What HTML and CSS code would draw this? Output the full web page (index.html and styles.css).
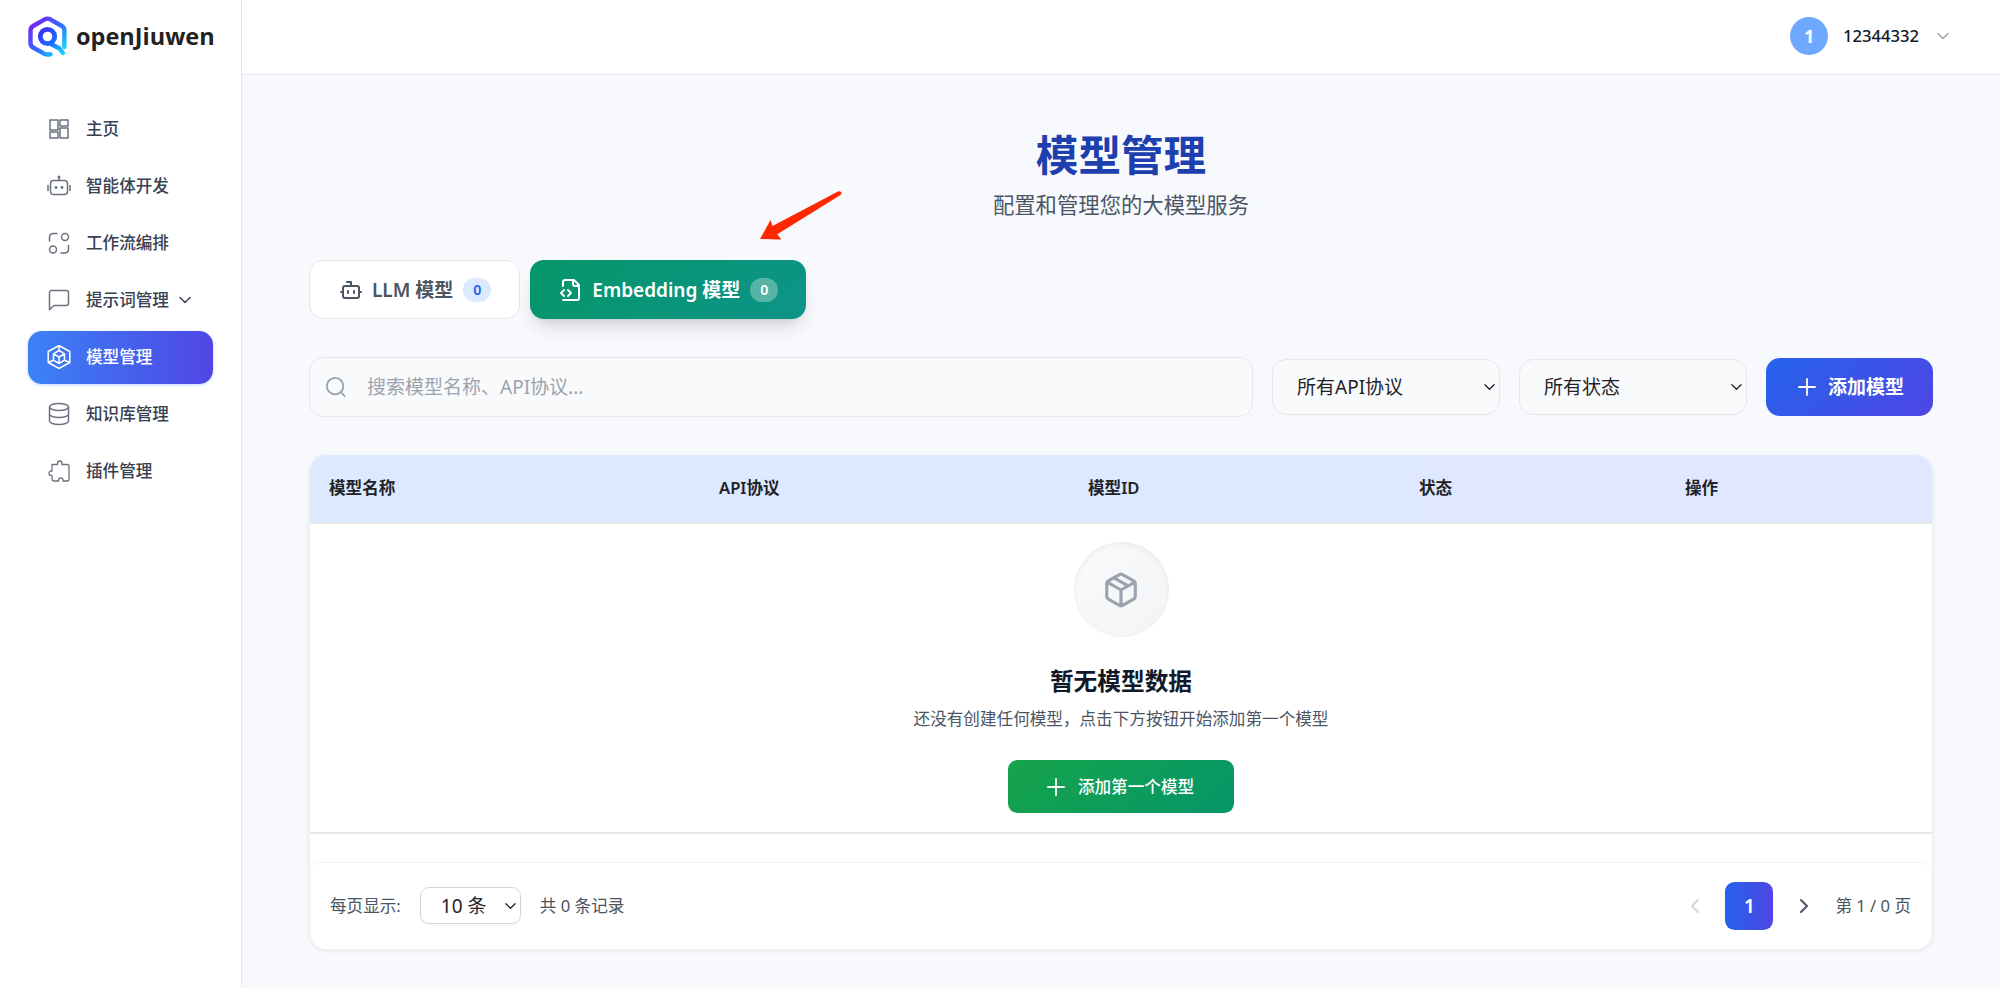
FILE: index.html
```html
<!DOCTYPE html>
<html lang="zh-CN">
<head>
    <meta charset="UTF-8">
    <meta name="viewport" content="width=device-width, initial-scale=1.0">
    <title>openJiuwen</title>
    <link rel="stylesheet" href="styles.css">
</head>
<body>
    <aside class="sidebar">
        <div class="logo">
            <svg class="logo-mark" viewBox="0 0 40 42" fill="none">
                <defs>
                    <linearGradient id="logo-outer" x1="4" y1="6" x2="38" y2="38" gradientUnits="userSpaceOnUse">
                        <stop offset="0" stop-color="#7a22f5"/>
                        <stop offset="0.5" stop-color="#2f6bff"/>
                        <stop offset="1" stop-color="#0ff0ff"/>
                    </linearGradient>
                    <linearGradient id="logo-inner" x1="12" y1="12" x2="38" y2="40" gradientUnits="userSpaceOnUse">
                        <stop offset="0" stop-color="#3a2bf5"/>
                        <stop offset="0.5" stop-color="#1d6dff"/>
                        <stop offset="1" stop-color="#0ff0ff"/>
                    </linearGradient>
                </defs>
                <path d="M36.4 31V14.500Q36.400 11.500 33.800 10L22.200 3.300Q19.500 1.900 16.800 3.300L5.100 10Q2.500 11.500 2.500 14.500V27Q2.500 30 5.100 31.500L16 37.700Q18.500 39 22.500 38.300" stroke="url(#logo-outer)" stroke-width="4.400" stroke-linecap="round"/>
                <circle cx="19.500" cy="20.500" r="7.200" stroke="url(#logo-inner)" stroke-width="4.800"/>
                <path d="M22 27.500L31.500 32.500L35 37" stroke="url(#logo-inner)" stroke-width="4.400" stroke-linecap="round" stroke-linejoin="round"/>
            </svg>
            <span class="logo-text">openJiuwen</span>
        </div>
        <nav class="nav">
            <a class="nav-item">
                <svg class="nav-icon" viewBox="0 0 24 24"><path d="M3 3h8v10H3zM13 3h8v6h-8zM13 11h8v10h-8zM3 15h8v6H3z"/></svg>
                <span>主页</span>
            </a>
            <a class="nav-item">
                <svg class="nav-icon" viewBox="0 0 24 24"><rect x="3.500" y="6.500" width="17" height="14" rx="3"/><path d="M12 6.500V3M1 11.500v5M23 11.500v5"/><circle cx="12" cy="3" r=".8"/><circle cx="9" cy="13.500" r=".7"/><circle cx="15" cy="13.500" r=".7"/></svg>
                <span>智能体开发</span>
            </a>
            <a class="nav-item">
                <svg class="nav-icon" viewBox="0 0 24 24"><circle cx="18" cy="6" r="3.500"/><circle cx="6" cy="18.500" r="3.500"/><path d="M2.500 10V6.500q0-4 4-4H10M21.500 14.500V18q0 4-4 4H14"/></svg>
                <span>工作流编排</span>
            </a>
            <a class="nav-item">
                <svg class="nav-icon" viewBox="0 0 24 24"><path d="M21.500 15.500a2 2 0 0 1-2 2H7l-4.500 4.300V4.500a2 2 0 0 1 2-2h15a2 2 0 0 1 2 2z"/></svg>
                <span>提示词管理</span>
                <svg class="nav-arrow" viewBox="0 0 12 8"><path d="M1 1.500l5 5 5-5"/></svg>
            </a>
            <a class="nav-item active">
                <svg class="nav-icon" viewBox="0 0 24 24"><path d="M12 .5l10.800 6v11L12 23.500 1.200 17.500v-11zM12 5.500l5.500 3.300v6.400L12 18.500l-5.500-3.300V8.800zM6.500 8.800L12 12l5.500-3.200M12 12v6.500M12 .5v5M1.200 17.500l5.300-2.300M22.800 17.500l-5.300-2.300"/></svg>
                <span>模型管理</span>
            </a>
            <a class="nav-item">
                <svg class="nav-icon" viewBox="0 0 24 24"><ellipse cx="12" cy="5" rx="9.500" ry="3.500"/><path d="M2.500 5v14c0 1.900 4.200 3.500 9.500 3.500s9.500-1.600 9.500-3.500V5M2.500 12c0 1.900 4.200 3.500 9.500 3.500s9.500-1.600 9.500-3.500"/></svg>
                <span>知识库管理</span>
            </a>
            <a class="nav-item">
                <svg class="nav-icon thin" viewBox="0 0 24 24"><path d="M5 5.500h5.500V4.200a2.200 2.200 0 0 1 4.400 0v1.300H20q2 0 2 2V20q0 2-2 2h-4v-1a2.200 2.200 0 0 0-4.400 0v1H7q-2 0-2-2v-3.600H4.200a2.200 2.200 0 0 1 0-4.400H5z"/></svg>
                <span>插件管理</span>
            </a>
        </nav>
    </aside>

    <div class="page">
        <header class="topbar">
            <span class="avatar">1</span>
            <span class="username">12344332</span>
            <svg class="user-arrow" viewBox="0 0 12 8"><path d="M1 1.500l5 5 5-5"/></svg>
        </header>

        <main class="content">
            <h1 class="title">模型管理</h1>
            <p class="subtitle">配置和管理您的大模型服务</p>

            <svg class="pointer" viewBox="0 0 82 49"><path d="M0 48L10.500 29 12.500 35 77.500 .8Q80 -.3 81.300 1.300 82 2.800 80.500 4L17.300 43.300 21.300 48.600z"/></svg>

            <div class="tabs">
                <button class="tab">
                    <svg class="tab-icon" viewBox="0 0 24 24"><path d="M12 8V4H8"/><rect width="16" height="12" x="4" y="8" rx="2"/><path d="M2 14h2M20 14h2M15 13v2M9 13v2"/></svg>
                    <span>LLM 模型</span>
                    <span class="count">0</span>
                </button>
                <button class="tab tab-active">
                    <svg class="tab-icon" viewBox="0 0 24 24"><path d="M4 22h14a2 2 0 0 0 2-2V7l-5-5H6a2 2 0 0 0-2 2v4"/><path d="M14 2v4a2 2 0 0 0 2 2h4M5 12l-3 3 3 3M9 18l3-3-3-3"/></svg>
                    <span>Embedding 模型</span>
                    <span class="count">0</span>
                </button>
            </div>

            <div class="filters">
                <div class="search">
                    <svg viewBox="0 0 24 24"><circle cx="11" cy="11" r="9"/><path d="M21.500 22l-4.300-4.500"/></svg>
                    <input type="text" placeholder="搜索模型名称、API协议...">
                </div>
                <div class="select">
                    <span>所有API协议</span>
                    <svg viewBox="0 0 12 8"><path d="M1 1.500l5 5 5-5"/></svg>
                </div>
                <div class="select">
                    <span>所有状态</span>
                    <svg viewBox="0 0 12 8"><path d="M1 1.500l5 5 5-5"/></svg>
                </div>
                <button class="add-btn">
                    <svg viewBox="0 0 16 16"><path d="M8 0v16M0 8h16"/></svg>
                    <span>添加模型</span>
                </button>
            </div>

            <section class="table-card">
                <div class="table-head">
                    <span>模型名称</span>
                    <span>API协议</span>
                    <span>模型ID</span>
                    <span>状态</span>
                    <span>操作</span>
                </div>
                <div class="empty">
                    <div class="empty-icon">
                        <svg viewBox="0 0 24 24"><path d="M11 21.730a2 2 0 0 0 2 0l7-4A2 2 0 0 0 21 16V8a2 2 0 0 0-1-1.730l-7-4a2 2 0 0 0-2 0l-7 4A2 2 0 0 0 3 8v8a2 2 0 0 0 1 1.730zM12 22V12M3.300 7L12 12l8.700-5M7.500 4.270l9 5.150"/></svg>
                    </div>
                    <h3>暂无模型数据</h3>
                    <p>还没有创建任何模型，点击下方按钮开始添加第一个模型</p>
                    <button class="first-btn">
                        <svg viewBox="0 0 16 16"><path d="M8 0v16M0 8h16"/></svg>
                        <span>添加第一个模型</span>
                    </button>
                </div>
                <div class="pagination">
                    <span>每页显示:</span>
                    <div class="page-size">
                        <span>10 条</span>
                        <svg viewBox="0 0 12 8"><path d="M1 1.500l5 5 5-5"/></svg>
                    </div>
                    <span>共 0 条记录</span>
                    <div class="pager">
                        <svg class="prev" viewBox="0 0 8 14"><path d="M7 1L1 7l6 6"/></svg>
                        <span class="page-no">1</span>
                        <svg class="next" viewBox="0 0 8 14"><path d="M1 1l6 6-6 6"/></svg>
                        <span class="page-info">第 1 / 0 页</span>
                    </div>
                </div>
            </section>
        </main>
    </div>
</body>
</html>
```
FILE: styles.css
```css
* {
    box-sizing: border-box;
}

body {
    margin: 0;
    display: flex;
    height: 988px;
    overflow: hidden;
    background: #f8f9fd;
    color: #1f2328;
    font-family: "Noto Sans", "Noto Sans CJK SC", sans-serif;
    font-size: 16.6px;
    line-height: 24px;
}

h1, h3, p {
    margin: 0;
}

button {
    font-family: inherit;
    line-height: inherit;
    border: none;
    padding: 0;
    cursor: pointer;
}

svg {
    display: block;
    flex: none;
    fill: none;
    stroke: currentColor;
    stroke-linecap: round;
    stroke-linejoin: round;
}

span {
    white-space: nowrap;
}

/* sidebar */
.sidebar {
    flex: none;
    width: 242px;
    padding: 16px 28px 0;
    background: #fff;
    border-right: 1px solid #e5e7eb;
}

.logo {
    display: flex;
    align-items: center;
    height: 42px;
    gap: 8px;
}

.logo-mark {
    width: 40px;
    height: 42px;
    stroke: none;
}

.logo-text {
    font-family: "Open Sans", "Noto Sans", sans-serif;
    font-size: 23.5px;
    font-weight: 700;
    color: #222;
    position: relative;
    top: -1px;
}

.nav {
    display: flex;
    flex-direction: column;
    gap: 4.4px;
    margin-top: 44.500px;
}

.nav-item {
    display: flex;
    align-items: center;
    height: 52.7px;
    padding-left: 19px;
    border-radius: 14px;
    color: #374151;
    font-weight: 500;
}

.nav-icon {
    width: 24px;
    height: 24px;
    margin-right: 15px;
    color: #6b7280;
    stroke-width: 1.5;
}

.nav-icon.thin {
    stroke-width: 1.3;
}

.nav-arrow {
    width: 12px;
    height: 8px;
    margin-left: 10px;
    stroke-width: 1.5;
}

.nav-item.active {
    background: linear-gradient(90deg, #3b82f6, #4f46e5);
    box-shadow: 0 1px 3px rgba(59, 130, 246, 0.35);
    color: #fff;
}

.nav-item.active .nav-icon {
    color: #fff;
}

/* top bar */
.page {
    flex: 1;
    display: flex;
    flex-direction: column;
}

.topbar {
    display: flex;
    align-items: center;
    justify-content: flex-end;
    height: 75px;
    padding: 0 51px 2px 0;
    background: #fff;
    border-bottom: 1px solid #e5e7eb;
}

.avatar {
    display: flex;
    align-items: center;
    justify-content: center;
    width: 38px;
    height: 38px;
    margin-right: 15px;
    border-radius: 50%;
    background: #6ea8ff;
    color: #fff;
    font-size: 18px;
    font-weight: 700;
}

.username {
    color: #111827;
    font-weight: 500;
}

.user-arrow {
    width: 12px;
    height: 8px;
    margin-left: 18px;
    color: #9ca3af;
    stroke-width: 1.4;
}

/* content */
.content {
    position: relative;
    padding: 52px 67px 0;
}

.title {
    height: 54px;
    color: #1e40af;
    font-size: 42.6px;
    font-weight: 700;
    line-height: 54px;
    text-align: center;
}

.subtitle {
    margin-top: 8px;
    color: #4b5563;
    font-size: 21.35px;
    line-height: 32px;
    text-align: center;
}

.pointer {
    position: absolute;
    left: 518px;
    top: 116px;
    width: 82px;
    height: 49px;
    fill: #ff2600;
    stroke: none;
}

.tabs {
    display: flex;
    gap: 10px;
    margin-top: 39px;
}

.tab {
    display: flex;
    align-items: center;
    height: 59px;
    padding: 0 28px 0 29px;
    border: 1px solid #e5e7eb;
    border-radius: 14px;
    background: #fff;
    color: #4b5563;
    font-size: 19px;
    font-weight: 600;
}

.tab-icon {
    width: 24px;
    height: 24px;
    margin-right: 9px;
    stroke-width: 2;
}

.count {
    width: 28px;
    height: 24px;
    margin-left: 10px;
    border-radius: 12px;
    background: #dbeafe;
    color: #2563eb;
    font-size: 14.2px;
    text-align: center;
}

.tab-active {
    border: none;
    background: linear-gradient(135deg, #059669, #0d9488);
    box-shadow: 0 12px 18px -4px rgba(0, 0, 0, 0.13), 0 4px 7px -4px rgba(0, 0, 0, 0.12);
    color: #fff;
}

.tab-active .count {
    background: rgba(255, 255, 255, 0.3);
    color: #fff;
}

.filters {
    display: flex;
    align-items: center;
    gap: 19px;
    margin-top: 38px;
}

.search {
    flex: 1;
    display: flex;
    align-items: center;
    height: 60px;
    padding-left: 15px;
    border: 1px solid #e5e7eb;
    border-radius: 14px;
    background: #f9fafb;
}

.search svg {
    width: 22px;
    height: 22px;
    margin-right: 20px;
    color: #9ca3af;
    stroke-width: 2;
}

.search input {
    flex: 1;
    border: none;
    outline: none;
    padding: 0;
    background: none;
    font-family: inherit;
    font-size: 19px;
}

.search input::placeholder {
    color: #9ca3af;
}

.select {
    display: flex;
    align-items: center;
    justify-content: space-between;
    width: 228px;
    height: 56px;
    padding: 0 4px 0 24px;
    border: 1px solid #e5e7eb;
    border-radius: 14px;
    background: #f9fafb;
    font-size: 19px;
}

.select svg {
    width: 11px;
    height: 8px;
    stroke-width: 1.4;
}

.add-btn {
    display: flex;
    align-items: center;
    justify-content: center;
    gap: 13px;
    width: 167px;
    height: 58px;
    padding-left: 4px;
    border-radius: 14px;
    background: linear-gradient(135deg, #2563eb, #4f46e5);
    color: #fff;
    font-size: 19px;
    font-weight: 600;
}

.add-btn svg,
.first-btn svg {
    width: 16px;
    height: 16px;
    overflow: visible;
    stroke-width: 1.8;
}

/* table */
.table-card {
    margin-top: 38px;
    height: 495px;
    border: 1px solid #f1f2f4;
    border-top: none;
    border-radius: 17px;
    background: #fff;
    box-shadow: 0 1px 4px rgba(0, 0, 0, 0.08);
    overflow: hidden;
}

.table-head {
    display: grid;
    grid-template-columns: 390px 369px 331px 266px 1fr;
    align-items: center;
    height: 68.5px;
    padding-left: 19px;
    border-bottom: 2px solid #e5e7eb;
    background: linear-gradient(90deg, #dbeafe, #e0e7ff);
    font-weight: 600;
}

.empty {
    display: flex;
    flex-direction: column;
    align-items: center;
    height: 310px;
    padding-top: 18.500px;
    border-bottom: 2px solid #e5e7eb;
}

.empty-icon {
    display: flex;
    align-items: center;
    justify-content: center;
    width: 95px;
    height: 95px;
    border-radius: 50%;
    background: linear-gradient(135deg, #f9fafb, #f3f4f6);
    box-shadow: inset 0 2px 5px rgba(0, 0, 0, 0.06);
    color: #9ca3af;
}

.empty-icon svg {
    width: 38px;
    height: 38px;
    stroke-width: 2;
}

.empty h3 {
    margin-top: 28px;
    color: #111827;
    font-size: 23.7px;
    font-weight: 600;
    line-height: 32px;
}

.empty p {
    margin-top: 10px;
    color: #4b5563;
}

.first-btn {
    display: flex;
    align-items: center;
    justify-content: center;
    gap: 14px;
    width: 226px;
    height: 53px;
    margin-top: 29px;
    border-radius: 9.500px;
    background: linear-gradient(135deg, #16a34a, #059669);
    color: #fff;
    font-size: 16.6px;
    font-weight: 500;
}

.pagination {
    display: flex;
    align-items: center;
    height: 88px;
    margin-top: 28px;
    padding: 0 20px 0 19px;
    border: 1px solid #f3f4f6;
    border-radius: 10px 10px 14px 14px;
    color: #4b5563;
}

.page-size {
    display: flex;
    align-items: center;
    justify-content: space-between;
    width: 101px;
    height: 37px;
    margin: 0 19px;
    padding: 0 4px 0 20px;
    border: 1px solid #d1d5db;
    border-radius: 9px;
    box-shadow: 0 1px 2px rgba(0, 0, 0, 0.06);
    color: #1f2328;
    font-size: 19px;
}

.page-size svg {
    width: 11px;
    height: 8px;
    stroke-width: 1.4;
}

.pager {
    display: flex;
    align-items: center;
    margin-left: auto;
}

.pager svg {
    width: 8px;
    height: 14px;
    overflow: visible;
    stroke-width: 2;
}

.prev {
    color: #d1d5db;
}

.page-no {
    width: 48px;
    height: 48px;
    margin: 0 27px 0 26px;
    border-radius: 9.500px;
    background: linear-gradient(90deg, #2563eb, #4f46e5);
    color: #fff;
    font-size: 19px;
    font-weight: 600;
    line-height: 48px;
    text-align: center;
}

.page-info {
    margin-left: 27px;
}
```
